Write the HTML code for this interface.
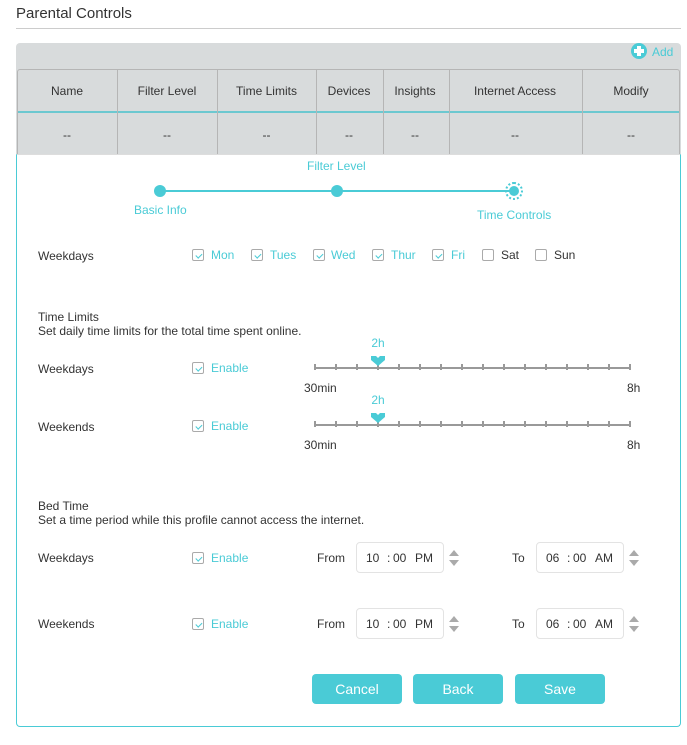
<!DOCTYPE html>
<html><head><style>
*{box-sizing:border-box;margin:0;padding:0}
body{width:687px;height:745px;background:#fff;font-family:"Liberation Sans",Arial,sans-serif;font-size:12px;color:#333;position:relative;overflow:hidden}
.a{position:absolute}
.t{color:#4acbd6}
.cb{position:absolute;width:12px;height:12px;border:1px solid #aaa;border-radius:2px;background:#fff}
.cb.c::after{content:"";position:absolute;left:3.5px;top:1.5px;width:2.5px;height:5px;border:solid #4acbd6;border-width:0 1.5px 1.5px 0;transform:rotate(45deg)}
.col{position:absolute;top:0;bottom:0;border-left:1px solid #b5b5b5}
.th{position:absolute;text-align:center;font-size:12px}
.time{position:absolute;width:88px;height:31px;border:1px solid #e3e3e3;border-radius:4px;background:#fff;font-size:12px}
.time span{position:absolute;top:8px}
.spin{position:absolute;width:10px;height:18px}
.spin::before{content:"";position:absolute;left:0;top:0;border:5px solid transparent;border-bottom:6px solid #aaa;border-top:0}
.spin::after{content:"";position:absolute;left:0;top:10px;border:5px solid transparent;border-top:6px solid #aaa;border-bottom:0}
.btn{position:absolute;top:674px;width:90px;height:30px;background:#4acbd6;color:#fff;border-radius:4px;font-size:14px;text-align:center;line-height:30px}
</style></head><body>
<div class="a" style="left:16px;top:5px;font-size:15px;color:#333">Parental Controls</div>
<div class="a" style="left:16px;top:28px;width:665px;height:1px;background:#ccc"></div>

<div class="a" style="left:16px;top:43px;width:665px;height:112px;background:#d8dbdc;border-radius:4px 4px 0 0"></div>
<div class="a" style="left:631px;top:43px;width:16px;height:16px;border-radius:50%;background:#4acbd6"></div>
<div class="a" style="left:637px;top:46px;width:4px;height:10px;background:#fff"></div>
<div class="a" style="left:634px;top:49px;width:10px;height:4px;background:#fff"></div>
<div class="a t" style="left:652px;top:45px;font-size:12px">Add</div>

<div class="a" style="left:17px;top:69px;width:663px;height:86px;border:1px solid #b5b5b5;border-bottom:0;border-radius:3px 3px 0 0">
 <div class="a" style="left:0;right:0;top:41px;height:2px;background:#6cc8d0"></div>
 <div class="col" style="left:99px"></div><div class="col" style="left:199px"></div><div class="col" style="left:298px"></div><div class="col" style="left:365px"></div><div class="col" style="left:431px"></div><div class="col" style="left:564px"></div>
</div>
<div class="th" style="left:17px;width:100px;top:84px">Name</div>
<div class="th" style="left:117px;width:100px;top:84px">Filter Level</div>
<div class="th" style="left:217px;width:99px;top:84px">Time Limits</div>
<div class="th" style="left:316px;width:66px;top:84px">Devices</div>
<div class="th" style="left:382px;width:66px;top:84px">Insights</div>
<div class="th" style="left:448px;width:134px;top:84px">Internet Access</div>
<div class="th" style="left:582px;width:98px;top:84px">Modify</div>
<div class="th" style="left:17px;width:100px;top:128px">--</div>
<div class="th" style="left:117px;width:100px;top:128px">--</div>
<div class="th" style="left:217px;width:99px;top:128px">--</div>
<div class="th" style="left:316px;width:66px;top:128px">--</div>
<div class="th" style="left:382px;width:66px;top:128px">--</div>
<div class="th" style="left:448px;width:134px;top:128px">--</div>
<div class="th" style="left:582px;width:98px;top:128px">--</div>

<div class="a" style="left:16px;top:154px;width:665px;height:573px;border:1px solid #4acbd6;border-top:1px solid #ddd;border-radius:0 0 4px 4px"></div>

<div class="a t" style="left:307px;top:159px">Filter Level</div>
<div class="a" style="left:160px;top:190px;width:354px;height:2px;background:#4acbd6"></div>
<div class="a" style="left:154px;top:185px;width:12px;height:12px;border-radius:50%;background:#4acbd6"></div>
<div class="a" style="left:331px;top:185px;width:12px;height:12px;border-radius:50%;background:#4acbd6"></div>
<div class="a" style="left:505px;top:182px;width:18px;height:18px;border-radius:50%;border:2px dotted #4acbd6"></div>
<div class="a" style="left:509px;top:186px;width:10px;height:10px;border-radius:50%;background:#4acbd6"></div>
<div class="a t" style="left:134px;top:203px">Basic Info</div>
<div class="a t" style="left:477px;top:208px">Time Controls</div>

<div class="a" style="left:38px;top:249px">Weekdays</div>
<div class="cb c" style="left:192px;top:249px"></div><div class="a t" style="left:211px;top:248px">Mon</div>
<div class="cb c" style="left:251px;top:249px"></div><div class="a t" style="left:270px;top:248px">Tues</div>
<div class="cb c" style="left:313px;top:249px"></div><div class="a t" style="left:331px;top:248px">Wed</div>
<div class="cb c" style="left:372px;top:249px"></div><div class="a t" style="left:391px;top:248px">Thur</div>
<div class="cb c" style="left:432px;top:249px"></div><div class="a t" style="left:451px;top:248px">Fri</div>
<div class="cb" style="left:482px;top:249px"></div><div class="a" style="left:501px;top:248px">Sat</div>
<div class="cb" style="left:535px;top:249px"></div><div class="a" style="left:554px;top:248px">Sun</div>

<div class="a" style="left:38px;top:310px">Time Limits</div>
<div class="a" style="left:38px;top:324px">Set daily time limits for the total time spent online.</div>

<div class="a" style="left:38px;top:362px">Weekdays</div>
<div class="cb c" style="left:192px;top:362px"></div><div class="a t" style="left:211px;top:361px">Enable</div>
<div class="a" style="left:38px;top:420px">Weekends</div>
<div class="cb c" style="left:192px;top:420px"></div><div class="a t" style="left:211px;top:419px">Enable</div>

<svg class="a" style="left:300px;top:334px" width="350" height="130">
 <g id="s1">
 <text x="78" y="13" fill="#4acbd6" font-size="12" text-anchor="middle" font-family="Liberation Sans">2h</text>
 <path d="M15 34H331" stroke="#999" stroke-width="2"/>
 <path d="M15 30v6M36 30v6M57 30v6M78 30v6M99 30v6M120 30v6M141 30v6M162 30v6M183 30v6M204 30v6M225 30v6M246 30v6M267 30v6M288 30v6M309 30v6M330 30v6" stroke="#999" stroke-width="2"/>
 <path d="M71 22h5l2 2l2-2h5v4l-7 6l-7-6z" fill="#4acbd6"/>
 <text x="4" y="58" fill="#333" font-size="12" font-family="Liberation Sans">30min</text>
 <text x="327" y="58" fill="#333" font-size="12" font-family="Liberation Sans">8h</text>
 </g>
 <use href="#s1" y="57"/>
</svg>

<div class="a" style="left:38px;top:499px">Bed Time</div>
<div class="a" style="left:38px;top:513px">Set a time period while this profile cannot access the internet.</div>

<div class="a" style="left:38px;top:551px">Weekdays</div>
<div class="cb c" style="left:192px;top:552px"></div><div class="a t" style="left:211px;top:551px">Enable</div>
<div class="a" style="left:317px;top:551px">From</div>
<div class="time" style="left:356px;top:542px"><span style="left:9px">10</span><span style="left:30px">:</span><span style="left:36px">00</span><span style="left:58px">PM</span></div>
<div class="spin" style="left:449px;top:550px"></div>
<div class="a" style="left:512px;top:551px">To</div>
<div class="time" style="left:536px;top:542px"><span style="left:9px">06</span><span style="left:30px">:</span><span style="left:36px">00</span><span style="left:58px">AM</span></div>
<div class="spin" style="left:629px;top:550px"></div>

<div class="a" style="left:38px;top:617px">Weekends</div>
<div class="cb c" style="left:192px;top:618px"></div><div class="a t" style="left:211px;top:617px">Enable</div>
<div class="a" style="left:317px;top:617px">From</div>
<div class="time" style="left:356px;top:608px"><span style="left:9px">10</span><span style="left:30px">:</span><span style="left:36px">00</span><span style="left:58px">PM</span></div>
<div class="spin" style="left:449px;top:616px"></div>
<div class="a" style="left:512px;top:617px">To</div>
<div class="time" style="left:536px;top:608px"><span style="left:9px">06</span><span style="left:30px">:</span><span style="left:36px">00</span><span style="left:58px">AM</span></div>
<div class="spin" style="left:629px;top:616px"></div>

<div class="btn" style="left:312px">Cancel</div>
<div class="btn" style="left:413px">Back</div>
<div class="btn" style="left:515px">Save</div>
</body></html>
